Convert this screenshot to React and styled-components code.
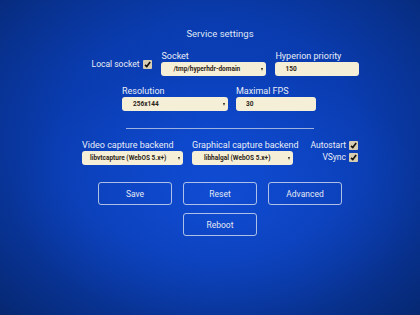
import React from 'react'
import styled, { createGlobalStyle } from 'styled-components'

const GlobalStyle = createGlobalStyle`
  html, body {
    margin: 0;
    padding: 0;
    background: #06276e;
  }
  * {
    box-sizing: border-box;
  }
`;

const Screen = styled.div`
  width: 420px;
  height: 315px;
  overflow: hidden;
  padding: 28px 0 0 20px;
  display: flex;
  flex-direction: column;
  align-items: center;
  font-family: Roboto, "Liberation Sans", sans-serif;
  color: #e6ebf6;
  background:
    radial-gradient(ellipse 70% 60% at 52% 62%, rgba(20, 85, 230, 0.55) 0%, rgba(20, 85, 230, 0) 70%),
    radial-gradient(ellipse 80% 85% at 50% 45%, #0b43c2 0%, #0a3cb0 45%, #08318d 72%, #052262 100%);
`;

const Title = styled.div`
  font-size: 9.5px;
  line-height: 12px;
  color: #dfe6f5;
`;

const Row = styled.div`
  display: flex;
  align-items: ${p => p.$align || 'flex-end'};
  gap: ${p => p.$gap || 9}px;
  margin-top: ${p => p.$top || 0}px;
  margin-left: ${p => p.$shift > 0 ? p.$shift : 0}px;
  margin-right: ${p => p.$shift < 0 ? -p.$shift : 0}px;
`;

const Field = styled.div`
  display: flex;
  flex-direction: column;
  width: ${p => p.$width}px;
`;

const FieldLabel = styled.div`
  font-size: 9px;
  line-height: 10px;
  margin-bottom: 1px;
  color: #e8edf7;
  white-space: nowrap;
`;

const Box = styled.div`
  height: 14px;
  border-radius: 3px;
  background: #f6efd7;
  color: #2b2519;
  display: flex;
  align-items: center;
  justify-content: space-between;
  padding: 0 3px 0 ${p => p.$pad || 10}px;
  font-size: 6.5px;
  font-weight: 700;
  white-space: nowrap;
`;

const Arrow = styled.span`
  width: 0;
  height: 0;
  border-left: 1.5px solid transparent;
  border-right: 1.5px solid transparent;
  border-top: 3px solid #2b2519;
`;

const CheckGroup = styled.div`
  display: flex;
  align-items: center;
  gap: ${p => p.$gap || 3}px;
  height: 10px;
  margin-bottom: ${p => p.$bottom || 0}px;
  font-size: 8.5px;
  color: #e8edf7;
  white-space: nowrap;
`;

const CheckBox = styled.span`
  width: 9px;
  height: 9px;
  border-radius: 1px;
  background: #d8cfb3;
  display: flex;
  align-items: center;
  justify-content: center;
`;

const CheckColumn = styled.div`
  display: flex;
  flex-direction: column;
  align-items: flex-end;
  gap: 2px;
  width: ${p => p.$width}px;
`;

const Divider = styled.div`
  width: 188px;
  height: 1px;
  margin-top: 17px;
  background: rgba(205, 215, 235, 0.75);
`;

const ButtonGrid = styled.div`
  display: grid;
  grid-template-columns: repeat(3, 74px);
  column-gap: 11px;
  row-gap: 8px;
  margin-top: 17px;
`;

const Button = styled.button`
  grid-column: ${p => p.$col || 'auto'};
  height: 23px;
  border: 1px solid rgba(215, 222, 238, 0.8);
  border-radius: 3px;
  background: transparent;
  color: #e3e8f4;
  font-family: Roboto, "Liberation Sans", sans-serif;
  font-size: 8.5px;
  padding: 0;
`;

const Check = ({ label, gap, bottom }) => (
  <CheckGroup $gap={gap} $bottom={bottom}>
    {label}
    <CheckBox>
      <svg width="7" height="7" viewBox="0 0 10 10">
        <path d="M1.5 5.5 L4 8 L8.8 1.5" fill="none" stroke="#151310" strokeWidth="2.4" strokeLinejoin="round" />
      </svg>
    </CheckBox>
  </CheckGroup>
);

const Select = ({ label, value, width, pad }) => (
  <Field $width={width}>
    <FieldLabel>{label}</FieldLabel>
    <Box $pad={pad}>
      {value}
      <Arrow />
    </Box>
  </Field>
);

const Input = ({ label, value, width }) => (
  <Field $width={width}>
    <FieldLabel>{label}</FieldLabel>
    <Box>{value}</Box>
  </Field>
);

const App = () => {
  return (
    <Screen>
      <GlobalStyle />
      <Title>Service settings</Title>

      <Row $top={11} $shift={11} $gap={9}>
        <Check label="Local socket" gap={4} bottom={7} />
        <Select label="Socket" value="/tmp/hyperhdr-domain" width={105} pad={12} />
        <Input label="Hyperion priority" value="150" width={84} />
      </Row>

      <Row $top={10} $shift={-2} $gap={8}>
        <Select label="Resolution" value="256x144" width={106} pad={11} />
        <Input label="Maximal FPS" value="30" width={80} />
      </Row>

      <Divider />

      <Row $top={11} $align="flex-start" $gap={9}>
        <Select label="Video capture backend" value="libvtcapture (WebOS 5.x+)" width={101} pad={8} />
        <Select label="Graphical capture backend" value="libhalgal (WebOS 5.x+)" width={101} pad={12} />
        <CheckColumn $width={56}>
          <Check label="Autostart" />
          <Check label="VSync" />
        </CheckColumn>
      </Row>

      <ButtonGrid>
        <Button>Save</Button>
        <Button>Reset</Button>
        <Button>Advanced</Button>
        <Button $col={2}>Reboot</Button>
      </ButtonGrid>
    </Screen>
  )
}

export default App
